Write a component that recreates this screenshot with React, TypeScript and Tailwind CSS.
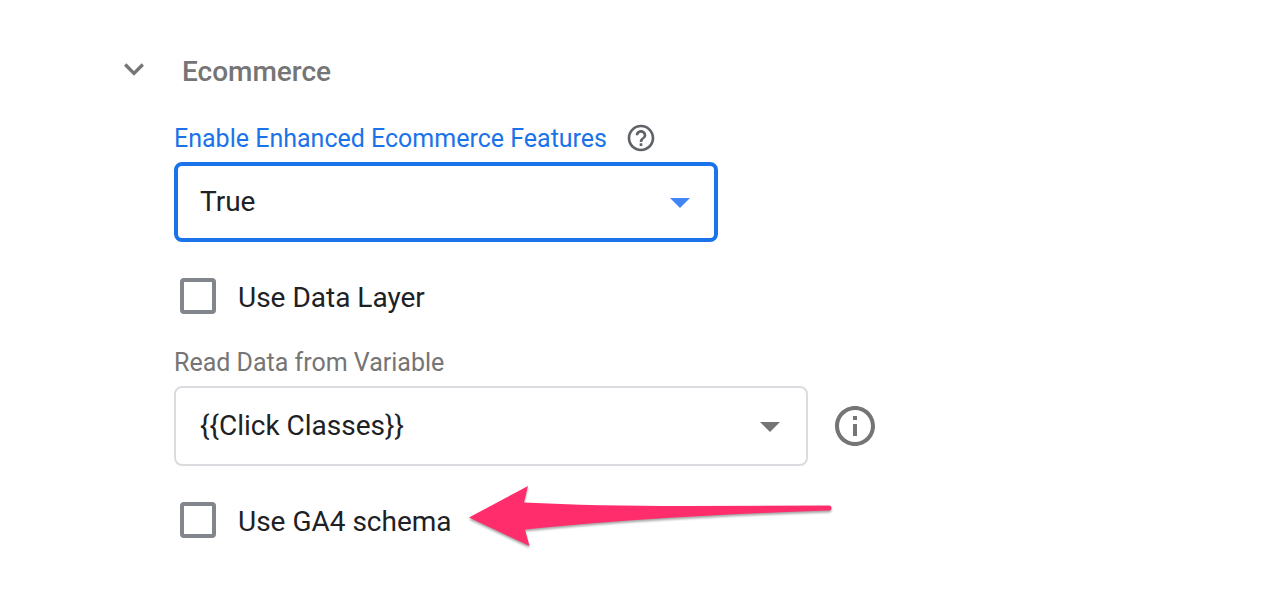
import { useState } from "react";

type CheckRowProps = { id: string; label: string };

function CheckRow({ id, label }: CheckRowProps) {
  return (
    <div className="flex h-9 items-start gap-[22px] pl-1.5">
      <input
        id={id}
        type="checkbox"
        className="size-9 shrink-0 appearance-none rounded-[4px] border-4 border-[#80868b] bg-white checked:bg-[#1a73e8]"
      />
      <label htmlFor={id} className="text-[28px] leading-10 text-[#202124]">
        {label}
      </label>
    </div>
  );
}

function Caret({ className }: { className: string }) {
  return (
    <svg
      viewBox="0 0 20 10"
      aria-hidden="true"
      className={`pointer-events-none absolute top-9 h-2.5 w-5 ${className}`}
    >
      <path d="M0 0h20L10 10z" fill="currentColor" />
    </svg>
  );
}

function Arrow() {
  return (
    <svg
      viewBox="0 0 372 70"
      aria-hidden="true"
      className="pointer-events-none absolute -top-5 left-[291px] h-[70px] w-[372px] drop-shadow-[0_2px_1px_rgba(0,0,0,0.35)]"
    >
      <path
        d="M4 35.500 L63 4 L59 20.500 Q130 24 220 24 L364 23.500 A2.500 2.500 0 0 1 364 28.500 Q190 34 60 47.500 L64.500 64 Z"
        fill="#ff2d6b"
      />
    </svg>
  );
}

export default function App() {
  const [open, setOpen] = useState(true);

  return (
    <main className="bg-white px-[122px] pt-[54px] pb-16 font-[Roboto,sans-serif]">
      <h2 className="text-[28px] leading-9 font-medium text-[#757575]">
        <button
          type="button"
          aria-expanded={open}
          onClick={() => setOpen(!open)}
          className="flex items-center gap-9"
        >
          <svg viewBox="0 0 24 24" aria-hidden="true" className="mb-1.5 size-6">
            <path d="M3.200 7.500 L12 16.300 L20.800 7.500" fill="none" stroke="currentColor" strokeWidth="3.300" />
          </svg>
          Ecommerce
        </button>
      </h2>

      {open && (
        <div className="mt-8 pl-[52px]">
          <div className="flex h-8 items-start gap-[18px]">
            <label htmlFor="enhanced" className="text-[25px] leading-[34px] text-[#1a73e8]">
              Enable Enhanced Ecommerce Features
            </label>
            <button type="button" aria-label="Help" className="text-[#5f6368]">
              <svg viewBox="0 0 24 24" className="size-8" fill="currentColor">
                <path d="M11 18h2v-2h-2v2zm1-16C6.480 2 2 6.480 2 12s4.480 10 10 10 10-4.480 10-10S17.520 2 12 2zm0 18c-4.410 0-8-3.590-8-8s3.590-8 8-8 8 3.590 8 8-3.590 8-8 8zm0-14c-2.210 0-4 1.790-4 4h2c0-1.100.9-2 2-2s2 .9 2 2c0 2-3 1.750-3 5h2c0-2.250 3-2.500 3-5 0-2.210-1.790-4-4-4z" />
              </svg>
            </button>
          </div>
          <div className="relative mt-2 max-w-[544px]">
            <select
              id="enhanced"
              className="block h-20 w-full appearance-none rounded-lg border-4 border-[#1a73e8] bg-white pr-16 pl-[22px] text-[28px] text-[#202124] outline-none"
            >
              <option>True</option>
              <option>False</option>
            </select>
            <Caret className="right-7 text-[#4285f4]" />
          </div>

          <div className="mt-9">
            <CheckRow id="data-layer" label="Use Data Layer" />
          </div>

          <div className="mt-8 flex h-8 items-start">
            <label htmlFor="variable" className="text-[25px] leading-[34px] text-[#757575]">
              Read Data from Variable
            </label>
          </div>
          <div className="mt-2 flex items-center gap-[23px]">
            <div className="relative w-full max-w-[634px]">
              <select
                id="variable"
                className="block h-20 w-full appearance-none rounded-lg border-2 border-[#dadce0] bg-white pr-16 pl-6 text-[28px] text-[#202124] outline-none"
              >
                <option>{"{{Click Classes}}"}</option>
              </select>
              <Caret className="right-7 text-[#757575]" />
            </div>
            <button type="button" aria-label="Variable information" className="shrink-0 text-[#757575]">
              <svg viewBox="0 0 24 24" className="size-12" fill="currentColor">
                <path d="M11 7h2v2h-2zm0 4h2v6h-2zm1-9C6.480 2 2 6.480 2 12s4.480 10 10 10 10-4.480 10-10S17.520 2 12 2zm0 18c-4.410 0-8-3.590-8-8s3.590-8 8-8 8 3.590 8 8-3.590 8-8 8z" />
              </svg>
            </button>
          </div>

          <div className="relative mt-9">
            <CheckRow id="ga4-schema" label="Use GA4 schema" />
            <Arrow />
          </div>
        </div>
      )}
    </main>
  );
}
